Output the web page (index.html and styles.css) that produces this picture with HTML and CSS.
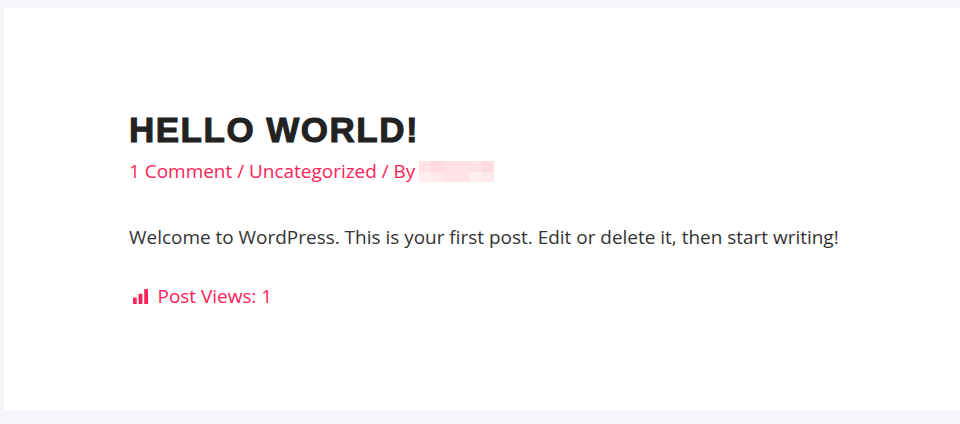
FILE: index.html
```html
<!DOCTYPE html>
<html lang="en">
<head>
<meta charset="utf-8">
<title>Hello world!</title>
<link rel="stylesheet" href="styles.css">
</head>
<body>
<main class="page">
  <article class="post">
    <h1 class="title">HELLO WORLD!</h1>
    <div class="meta">
      <a href="#">1 Comment</a> / <a href="#">Uncategorized</a> / By<span class="blur" aria-hidden="true"><i class="a"></i><i class="b"></i><i class="c"></i><i class="c"></i><i class="a"></i><i class="b"></i><i class="d"></i><i class="e"></i><i class="a"></i><i class="a"></i><i class="d"></i><i class="e"></i></span>
    </div>
    <p class="content">Welcome to WordPress. This is your first post. Edit or delete it, then start writing!</p>
    <div class="views">
      <svg class="icon" viewBox="0 0 16 16" aria-hidden="true"><rect x="0" y="9" width="4" height="7" rx=".6"/><rect x="6" y="5" width="4" height="11" rx=".6"/><rect x="12" y="0" width="4" height="16" rx=".6"/></svg>
      <span>Post Views: 1</span>
    </div>
  </article>
</main>
</body>
</html>
```
FILE: styles.css
```css
* { box-sizing: border-box; }
html, body { margin: 0; height: 100%; }
body {
  background: #f5f5fa;
  padding: 8px 0 14px 4px;
  font-family: "Open Sans", sans-serif;
  font-size: 18.97px;
  color: #333;
  overflow: hidden;
}
.page { background: #fff; height: 402px; padding: 100px 0 0 125px; }
.title {
  margin: 0;
  font-family: "Liberation Sans", Arial, sans-serif;
  font-weight: 700;
  font-size: 35px;
  line-height: 44px;
  letter-spacing: 1.5px;
  -webkit-text-stroke: 1px #222;
  color: #222;
}
.meta {
  margin-top: 4px;
  line-height: 30px;
  color: #ff2257;
  display: flex;
  white-space: pre;
}
.meta a { color: inherit; text-decoration: none; }
.blur {
  display: grid;
  grid-template-columns: repeat(6, 12.5px);
  grid-template-rows: repeat(2, 10.5px);
  margin: 5px 0 0 3.5px;
  width: 75px;
  height: 21px;
}
.blur i { display: block; }
.blur .a { background: #ffe3e7; }
.blur .b { background: #ffdbe1; }
.blur .c { background: #ffe0e5; }
.blur .d { background: #ffedef; }
.blur .e { background: #ffe8eb; }
.content { margin: 0; padding-top: 36px; line-height: 30px; }
.views {
  margin-top: 29px;
  display: flex;
  align-items: center;
  gap: 9.5px;
  line-height: 30px;
  color: #ff2257;
}
.icon { width: 15px; height: 15px; fill: #ff2257; margin-left: 4px; }
```
